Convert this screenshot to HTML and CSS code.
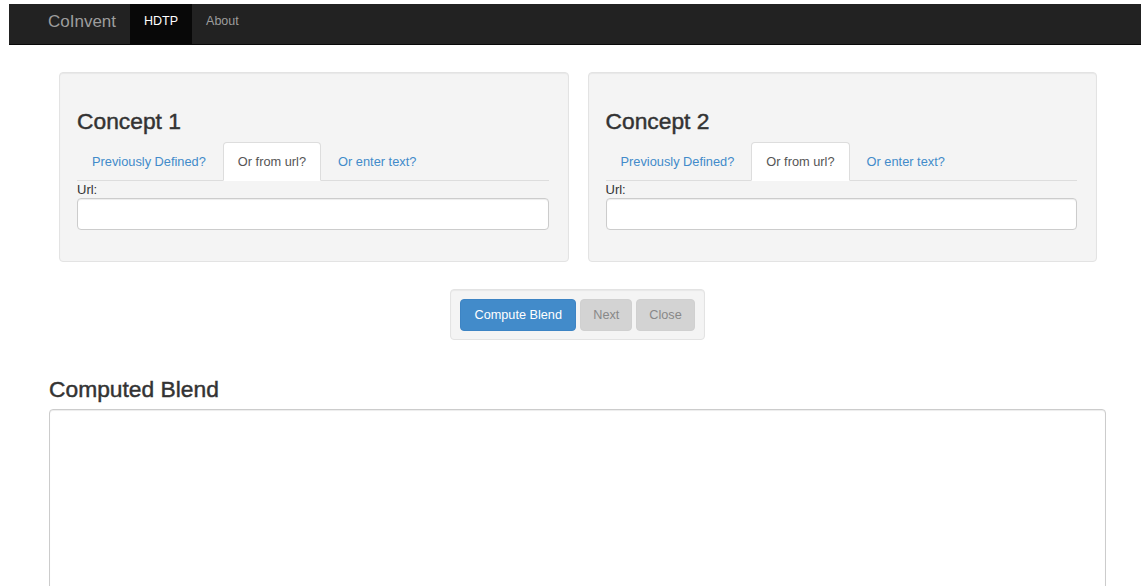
FILE: index.html
```html
<!DOCTYPE html>
<html lang="en">
<head>
<meta charset="utf-8">
<title>CoInvent – HDTP</title>
<link rel="stylesheet" href="styles.css">
</head>
<body>
<div class="page">
  <nav class="navbar">
    <a class="brand" href="#">CoInvent</a>
    <ul class="nav">
      <li class="active"><a href="#">HDTP</a></li>
      <li><a href="#">About</a></li>
    </ul>
  </nav>

  <main class="main">
    <div class="concepts">
      <section class="well concept">
        <h3>Concept 1</h3>
        <ul class="tabs">
          <li><a href="#">Previously Defined?</a></li>
          <li class="active"><a href="#">Or from url?</a></li>
          <li><a href="#">Or enter text?</a></li>
        </ul>
        <label class="field-label" for="url1">Url:</label>
        <input class="form-control" id="url1" type="text">
      </section>
      <section class="well concept">
        <h3>Concept 2</h3>
        <ul class="tabs">
          <li><a href="#">Previously Defined?</a></li>
          <li class="active"><a href="#">Or from url?</a></li>
          <li><a href="#">Or enter text?</a></li>
        </ul>
        <label class="field-label" for="url2">Url:</label>
        <input class="form-control" id="url2" type="text">
      </section>
    </div>

    <div class="actions-row">
      <div class="well actions">
        <button class="btn btn-primary" type="button">Compute Blend</button>
        <button class="btn btn-muted" type="button" disabled>Next</button>
        <button class="btn btn-muted" type="button" disabled>Close</button>
      </div>
    </div>

    <h3 class="blend-title">Computed Blend</h3>
    <textarea class="blend-output"></textarea>
  </main>
</div>
</body>
</html>
```

FILE: styles.css
```css
* {
  box-sizing: border-box;
}

html, body {
  margin: 0;
  padding: 0;
  overflow: hidden;
}

body {
  font-family: "Liberation Sans", Arial, Helvetica, sans-serif;
  font-size: 13px;
  line-height: 1.42857;
  color: #333;
  background: #fff;
}

a {
  text-decoration: none;
}

.page {
  padding: 4px 0 0 9px;
}

/* Top navigation bar */
.navbar {
  display: flex;
  align-items: stretch;
  height: 41px;
  padding-left: 24px;
  background: #222;
  border-bottom: 1px solid #080808;
}

.brand {
  display: flex;
  align-items: center;
  padding: 0 14px 3px 15px;
  font-size: 17px;
  color: #9d9d9d;
}

.nav {
  display: flex;
  list-style: none;
  margin: 0;
  padding: 0;
}

.nav li a {
  display: flex;
  align-items: center;
  height: 100%;
  padding: 0 14px 4px;
  font-size: 12.5px;
  color: #9d9d9d;
}

.nav li.active a {
  background: #080808;
  color: #fff;
}

/* Main content */
.main {
  width: 1057px;
  margin-left: 40px;
  padding-top: 27px;
}

.concepts {
  display: flex;
  gap: 19px;
  margin: 0 9px 0 10px;
}

.well {
  background: #f4f4f4;
  border: 1px solid #e3e3e3;
  border-radius: 4px;
  box-shadow: inset 0 1px 1px rgba(0, 0, 0, 0.05);
}

.concept {
  flex: 1 1 0;
  padding: 19px 19px 31px 17px;
}

.concept h3,
.blend-title {
  font-size: 22.8px;
  font-weight: 400;
  line-height: 24px;
  color: #333;
  -webkit-text-stroke: 0.45px currentColor;
}

.concept h3 {
  margin: 17px 0 9px;
}

.tabs {
  display: flex;
  list-style: none;
  margin: 0;
  padding: 0;
  border-bottom: 1px solid #ddd;
}

.tabs li {
  margin-right: 2px;
  margin-bottom: -1px;
}

.tabs li a {
  display: block;
  padding: 10px 14px 9px;
  font-size: 12.8px;
  line-height: 18px;
  color: #428bca;
  border: 1px solid transparent;
  border-radius: 4px 4px 0 0;
}

.tabs li.active a {
  color: #555;
  background: #fff;
  border-color: #ddd #ddd transparent;
}

.field-label {
  display: block;
  margin-top: 0;
  line-height: 17px;
  color: #333;
}

.form-control {
  display: block;
  width: 100%;
  height: 32px;
  padding: 6px 12px;
  font: inherit;
  background: #fff;
  border: 1px solid #ccc;
  border-radius: 4px;
  box-shadow: inset 0 1px 1px rgba(0, 0, 0, 0.075);
}

/* Button bar */
.actions-row {
  display: flex;
  justify-content: center;
  margin-top: 27px;
}

.actions {
  display: flex;
  gap: 4px;
  padding: 9px 9px 8px;
}

.btn {
  height: 32px;
  padding: 5px 12px;
  font: inherit;
  font-size: 12.7px;
  line-height: 18px;
  border: 1px solid transparent;
  border-radius: 4px;
}

.btn-primary {
  color: #fff;
  background: #428bca;
  border-color: #3d84c4;
  width: 116px;
}

.btn-muted {
  color: #888;
  background: #d3d3d3;
  border-color: #d0d0d0;
}

.btn-muted:first-of-type + .btn-muted {
  margin-left: -1px;
}

.blend-title {
  margin: 37px 0 8px;
}

.blend-output {
  display: block;
  width: 100%;
  height: 200px;
  border: 1px solid #ccc;
  border-radius: 4px;
  background: #fff;
  box-shadow: inset 0 1px 1px rgba(0, 0, 0, 0.075);
  resize: none;
}
```
